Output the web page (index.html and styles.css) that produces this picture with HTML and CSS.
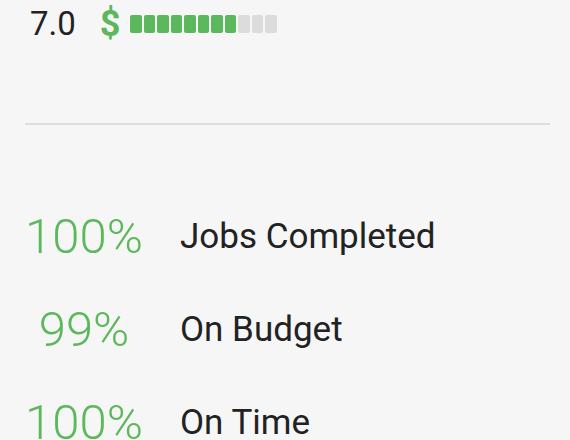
FILE: index.html
```html
<!DOCTYPE html>
<html>
<head>
<meta charset="utf-8">
<link rel="stylesheet" href="styles.css">
</head>
<body>
<div class="page">
  <div class="rating">
    <span class="score">7.0</span>
    <span class="dollar">$</span>
    <div class="bars">
      <span class="bar on"></span><span class="bar on"></span><span class="bar on"></span><span class="bar on"></span>
      <span class="bar on"></span><span class="bar on"></span><span class="bar on"></span><span class="bar on"></span>
      <span class="bar"></span><span class="bar"></span><span class="bar"></span>
    </div>
  </div>
  <hr class="divider">
  <div class="stats">
    <div class="stat"><span class="pct">100%</span><span class="label">Jobs Completed</span></div>
    <div class="stat"><span class="pct">99%</span><span class="label">On Budget</span></div>
    <div class="stat"><span class="pct">100%</span><span class="label">On Time</span></div>
  </div>
</div>
</body>
</html>
```
FILE: styles.css
```css
html, body {
  margin: 0;
  background: #f6f6f6;
  font-family: Roboto, "Liberation Sans", sans-serif;
  color: #222;
}
.page {
  width: 570px;
  height: 440px;
  overflow: hidden;
}
.rating {
  display: flex;
  align-items: center;
  padding: 6px 0 0 30px;
  height: 36px;
}
.score {
  font-size: 33px;
  line-height: 36px;
  color: #222;
}
.dollar {
  margin-left: 24px;
  font-size: 36px;
  font-weight: 700;
  color: #5cb85c;
  line-height: 36px;
}
.bars {
  display: flex;
  gap: 2px;
  margin-left: 10px;
}
.bar {
  width: 11.5px;
  height: 18px;
  border-radius: 2px;
  background: #dcdcdc;
}
.bar.on {
  background: #5cb85c;
}
.divider {
  border: 0;
  height: 2px;
  background: #dedede;
  margin: 81px 20px 0 25px;
}
.stats {
  display: flex;
  flex-direction: column;
  margin-top: 85px;
}
.stat {
  display: flex;
  align-items: center;
  height: 93px;
}
.pct {
  width: 168px;
  text-align: center;
  font-size: 49px;
  font-weight: 300;
  color: #5cb85c;
  margin-top: -40px;
}
.label {
  margin-left: 12px;
  font-size: 35px;
  color: #222;
  margin-top: -40px;
}
```
